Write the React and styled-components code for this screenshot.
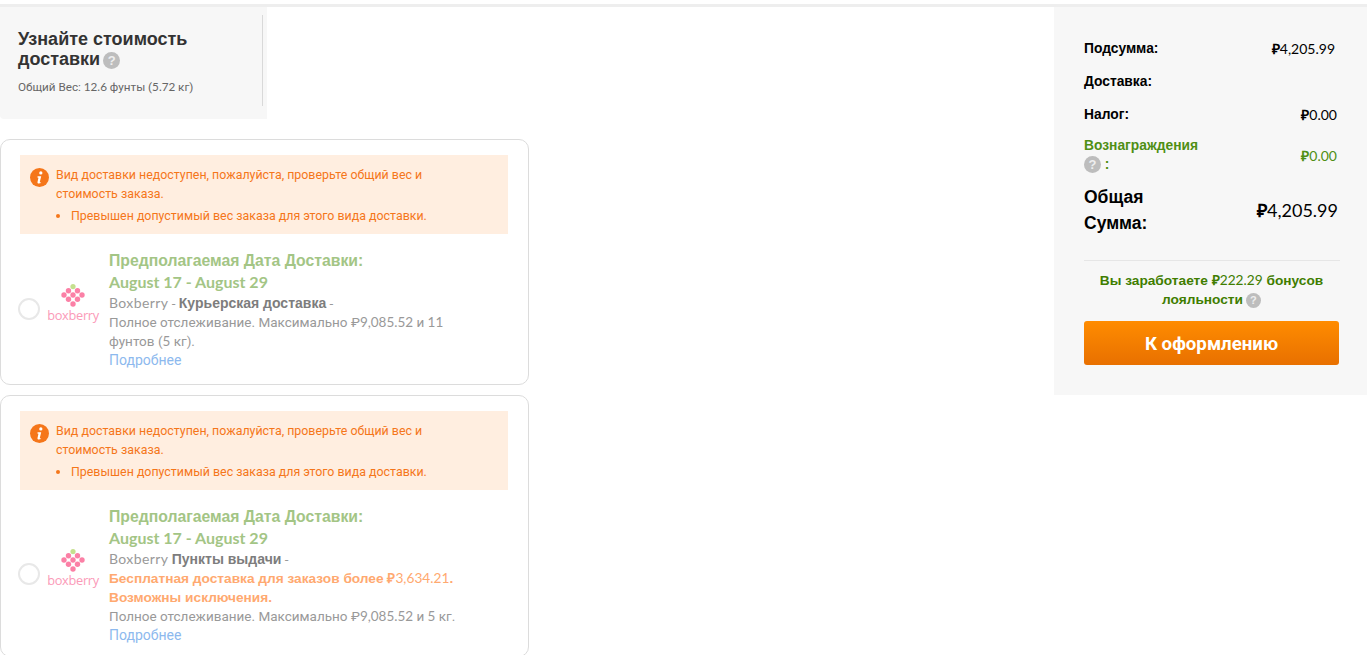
import React from "react";
import styled, { createGlobalStyle } from "styled-components";

const GlobalStyle = createGlobalStyle`
  html, body {
    margin: 0;
    padding: 0;
    height: 655px;
    overflow: hidden;
    background: #fff;
    font-family: "Liberation Sans", sans-serif;
  }
  * { box-sizing: border-box; }
`;

const Page = styled.div`
  display: flex;
  justify-content: space-between;
  align-items: flex-start;
  border-top: 3px solid #eeeeee;
  margin-top: 4px;
  height: 651px;
  overflow: hidden;
`;

const Lat = styled.span`
  font-family: Lato, sans-serif;
  line-height: 1;
`;

const Plain = styled(Lat)`
  font-weight: 400;
`;

const Carrier = styled(Lat)`
  font-size: 14px;
  letter-spacing: 0.4px;
`;

const Rub = styled.b`
  font-family: "Liberation Sans", sans-serif;
  font-weight: 700;
  line-height: 1;
`;

const LeftColumn = styled.div`
  width: 529px;
  display: flex;
  flex-direction: column;
`;

const EstimatePanel = styled.div`
  width: 267px;
  height: 112px;
  padding: 8px 4px 12px 0;
  background: #f7f7f7;
  margin-bottom: 20px;
  border-bottom-left-radius: 4px;
`;

const EstimateInner = styled.div`
  height: 91px;
  padding: 14px 18px 0 18px;
  border-right: 1px solid #d9d9d9;
`;

const EstimateTitle = styled.h3`
  margin: 0 0 10px;
  font-size: 18px;
  line-height: 20px;
  font-weight: 700;
  color: #333;
`;

const EstimateWeight = styled.div`
  font-family: Roboto, sans-serif;
  font-size: 11.7px;
  line-height: 16px;
  color: #666;
`;

const HelpMark = styled.span`
  display: inline-flex;
  align-items: center;
  justify-content: center;
  width: ${(p) => p.$size}px;
  height: ${(p) => p.$size}px;
  margin: -4px 0 -4px ${(p) => p.$gap ?? 3}px;
  border-radius: 50%;
  background: #bdbdbd;
  color: #eee;
  font-size: ${(p) => p.$size - 4}px;
  line-height: 1;
  font-weight: 700;
  font-family: "Liberation Sans", sans-serif;
`;

const Card = styled.div`
  border: 1px solid #dcdcdc;
  border-radius: 10px;
  padding: 15px 20px 15px 17px;
  margin-bottom: 10px;
  height: ${(p) => p.$height}px;
  flex-shrink: 0;
`;

const Alert = styled.div`
  display: flex;
  width: 488px;
  height: 79px;
  margin: 0 0 16px 2px;
  padding: 10px 10px 0 10px;
  background: #ffeee0;
  color: #f5761a;
  font-family: Roboto, sans-serif;
  font-size: 12.4px;
  line-height: 19px;
`;

const AlertIcon = styled.svg`
  width: 19px;
  height: 19px;
  flex-shrink: 0;
  margin: 3px 7px 0 0;
`;

const AlertBody = styled.div`
  flex: 1;
`;

const AlertText = styled.div`
  max-width: 376px;
  margin-bottom: 3px;
`;

const AlertList = styled.ul`
  margin: 0;
  padding: 0 0 0 15px;
`;

const OptionRow = styled.div`
  display: flex;
  align-items: center;
`;

const Radio = styled.span`
  width: 22px;
  height: 22px;
  margin: -3px 7px 0 0;
  border: 2px solid #e8e8e8;
  border-radius: 50%;
  background: #fff;
  flex-shrink: 0;
`;

const LogoWrap = styled.div`
  width: 54px;
  margin: -15px 8px 0 -1px;
  flex-shrink: 0;
  display: flex;
  flex-direction: column;
  align-items: center;
`;

const LogoWord = styled.span`
  font-size: 12.8px;
  line-height: 14px;
  color: #fb9ab8;
  margin-top: 1px;
  font-family: "Open Sans", sans-serif;
  font-weight: 400;
  letter-spacing: -0.3px;
`;

const OptionInfo = styled.div`
  width: 352px;
  margin-left: 1px;
  font-family: Roboto, sans-serif;
  font-size: 13.5px;
  line-height: 19px;
  color: #999;
`;

const DateLine = styled.div`
  font-family: "Liberation Sans", sans-serif;
  font-size: 15.75px;
  line-height: 22px;
  font-weight: 700;
  color: #a3c585;
`;

const DateRange = styled(Lat)`
  font-size: 16px;
`;

const Strong = styled.b`
  font-family: "Liberation Sans", sans-serif;
  font-size: 14px;
  font-weight: 700;
  color: #7d7d7d;
`;

const FreeNote = styled.div`
  max-width: 346px;
  font-family: "Liberation Sans", sans-serif;
  font-size: 13.7px;
  font-weight: 700;
  color: #ffa970;
`;

const MoreLink = styled.a`
  display: block;
  font-size: 14px;
  color: #8db9ee;
`;

const SummaryPanel = styled.div`
  width: 313px;
  height: 388px;
  padding: 25px 28px 0 30px;
  background: #f7f7f7;
  flex-shrink: 0;
`;

const SummaryRow = styled.div`
  display: flex;
  justify-content: space-between;
  align-items: center;
  min-height: ${(p) => p.$height}px;
  color: ${(p) => p.$color || "#000"};
  font-size: ${(p) => p.$size || 13.8}px;
`;

const SummaryLabel = styled.div`
  width: 118px;
  font-weight: 700;
  line-height: ${(p) => p.$line || 19}px;
`;

const SummaryValue = styled.div`
  font-family: Lato, sans-serif;
  font-size: ${(p) => p.$size || 14}px;
  padding-right: ${(p) => p.$pad || 0}px;
`;

const Divider = styled.div`
  height: 1px;
  background: #e6e6e6;
  margin: 19px -1px 0 0;
`;

const LoyaltyNote = styled.div`
  margin-top: 10px;
  text-align: center;
  font-size: 13.7px;
  line-height: 19px;
  font-weight: 700;
  color: #3f7d00;
`;

const CheckoutButton = styled.button`
  display: block;
  width: 255px;
  height: 44px;
  margin: 12px 0 0;
  padding: 2px 0 0;
  border: 0;
  border-radius: 3px;
  background: linear-gradient(#ff8c00, #e87000);
  color: #fff;
  font-family: Roboto, sans-serif;
  font-size: 18.7px;
  font-weight: 700;
`;

const InfoIcon = () => (
  <AlertIcon viewBox="0 0 20 20">
    <circle cx="10" cy="10" r="10" fill="#f5761a" />
    <circle cx="11.4" cy="5.2" r="1.7" fill="#fff" />
    <path d="M8 8.6h3.8l-1.5 6.2c-.1.5.4.6 1.4.1l-.2 1c-1.6.8-4 .9-3.6-1.1l1-4.6-1.1-.3z" fill="#fff" />
  </AlertIcon>
);

const BERRIES = [
  [13.5, 6.7], [22.5, 6.7],
  [9, 11], [18, 11], [27, 11],
  [13.5, 15.3], [22.5, 15.3],
  [18, 20],
];

const BoxberryLogo = () => (
  <LogoWrap>
    <svg width="36" height="23" viewBox="0 0 36 23">
      <circle cx="18" cy="2.6" r="2.6" fill="#c5e08e" />
      {BERRIES.map(([x, y]) => (
        <circle key={`${x}-${y}`} cx={x} cy={y} r="2.7" fill="#fb80a6" />
      ))}
    </svg>
    <LogoWord>boxberry</LogoWord>
  </LogoWrap>
);

const ShippingCard = ({ height, children }) => (
  <Card $height={height}>
    <Alert>
      <InfoIcon />
      <AlertBody>
        <AlertText>
          Вид доставки недоступен, пожалуйста, проверьте общий вес и стоимость заказа.
        </AlertText>
        <AlertList>
          <li>Превышен допустимый вес заказа для этого вида доставки.</li>
        </AlertList>
      </AlertBody>
    </Alert>
    <OptionRow>
      <Radio />
      <BoxberryLogo />
      <OptionInfo>
        <DateLine>Предполагаемая Дата Доставки:</DateLine>
        <DateLine><DateRange>August 17 - August 29</DateRange></DateLine>
        {children}
        <MoreLink>Подробнее</MoreLink>
      </OptionInfo>
    </OptionRow>
  </Card>
);

export default function App() {
  return (
    <>
      <GlobalStyle />
      <Page>
        <LeftColumn>
          <EstimatePanel>
            <EstimateInner>
              <EstimateTitle>
                Узнайте стоимость доставки
                <HelpMark $size={17}>?</HelpMark>
              </EstimateTitle>
              <EstimateWeight>Общий Вес: <Lat>12.6</Lat> фунты (<Lat>5.72</Lat> кг)</EstimateWeight>
            </EstimateInner>
          </EstimatePanel>
          <ShippingCard height={246}>
            <div>
              <Carrier>Boxberry</Carrier> - <Strong>Курьерская доставка</Strong> -
            </div>
            <div>Полное отслеживание. Максимально ₽<Lat>9,085.52</Lat> и <Lat>11</Lat> фунтов (<Lat>5</Lat> кг).</div>
          </ShippingCard>
          <ShippingCard height={262}>
            <div>
              <Carrier>Boxberry</Carrier> <Strong>Пункты выдачи</Strong> -
            </div>
            <FreeNote>Бесплатная доставка для заказов более ₽<Plain>3,634.21</Plain>. Возможны исключения.</FreeNote>
            <div>Полное отслеживание. Максимально ₽<Lat>9,085.52</Lat> и <Lat>5</Lat> кг.</div>
          </ShippingCard>
        </LeftColumn>
        <SummaryPanel>
          <SummaryRow $height={33}>
            <SummaryLabel>Подсумма:</SummaryLabel>
            <SummaryValue $pad={4}><Rub>₽</Rub>4,205.99</SummaryValue>
          </SummaryRow>
          <SummaryRow $height={33}>
            <SummaryLabel>Доставка:</SummaryLabel>
          </SummaryRow>
          <SummaryRow $height={33}>
            <SummaryLabel>Налог:</SummaryLabel>
            <SummaryValue $pad={2}><Rub>₽</Rub>0.00</SummaryValue>
          </SummaryRow>
          <SummaryRow $height={48} $color="#4f8f14">
            <SummaryLabel>
              Вознаграждения
              <br />
              <HelpMark $size={17} $gap={0}>?</HelpMark> :
            </SummaryLabel>
            <SummaryValue $pad={2}><Rub>₽</Rub>0.00</SummaryValue>
          </SummaryRow>
          <SummaryRow $height={62} $size={17.5}>
            <SummaryLabel $line={26}>Общая<br />Сумма:</SummaryLabel>
            <SummaryValue $pad={1} $size={18}><Rub>₽</Rub>4,205.99</SummaryValue>
          </SummaryRow>
          <Divider />
          <LoyaltyNote>
            Вы заработаете ₽<Plain>222.29</Plain> бонусов лояльности
            <HelpMark $size={15}>?</HelpMark>
          </LoyaltyNote>
          <CheckoutButton>К оформлению</CheckoutButton>
        </SummaryPanel>
      </Page>
    </>
  );
}
